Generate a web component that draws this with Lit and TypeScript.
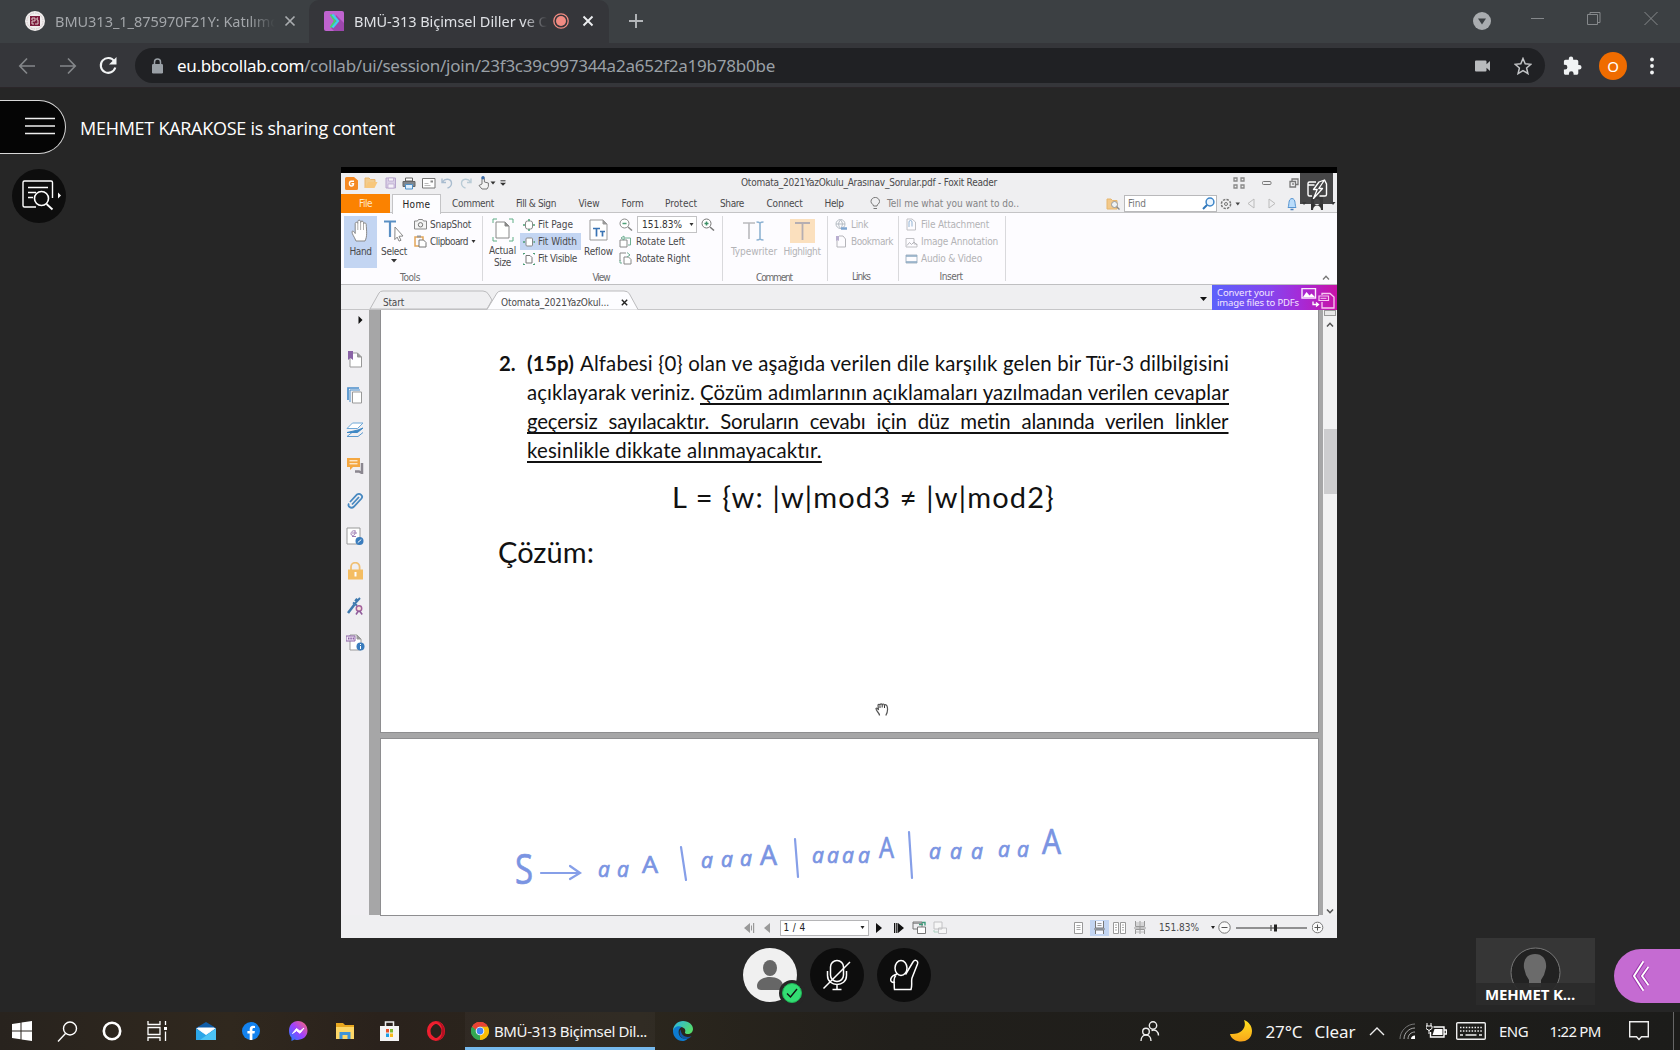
import { LitElement, html, svg, css } from "lit";
import { customElement, property } from "lit/decorators.js";

/** One line of text whose tracking is adjusted so that it spans exactly `w` pixels. */
@customElement("fit-text")
class FitText extends LitElement {
  @property({ type: Number }) w = 0;
  @property() text = "";
  static styles = css`
    :host { display: inline-block; white-space: pre; flex: none; text-align: left; }
    span { text-decoration: inherit; text-underline-offset: inherit; text-decoration-thickness: inherit; text-decoration-skip-ink: inherit; }
  `;
  render() {
    return html`<span>${this.text}</span>`;
  }
  updated() {
    const span = this.renderRoot.querySelector("span") as HTMLElement;
    span.style.letterSpacing = "0px";
    const natural = span.getBoundingClientRect().width;
    if (this.w > 0) {
      span.style.letterSpacing = `${(this.w - natural) / this.text.length}px`;
      this.style.width = `${this.w}px`;
    }
  }
}

const fit = (text: string, w: number, cls = "") => html`<fit-text class=${cls} .text=${text} .w=${w}></fit-text>`;
const ic = (w: number, h: number, body: unknown, cls = "") =>
  html`<svg class=${"ic " + cls} width=${w} height=${h} viewBox="0 0 ${w} ${h}" fill="none">${body}</svg>`;
const down = (c = "#333") => ic(6, 4, svg`<path d="M0 0h6L3 3.6z" fill=${c}/>`);

const base = css`
  :host { display: block; box-sizing: border-box; }
  * { box-sizing: border-box; }
  .ic { display: block; flex: none; }
`;

@customElement("browser-tabs")
class BrowserTabs extends LitElement {
  static styles = [base, css`
    :host { height: 43px; background: #3c4043; font: 14.5px/20px "Noto Sans", "Open Sans", sans-serif; color: #a3a6aa; }
    .strip { display: flex; height: 43px; align-items: stretch; }
    .tab { display: flex; align-items: center; padding-bottom: 1px; }
    .first { width: 309px; padding-left: 25px; }
    .active { width: 300px; padding-left: 15px; background: #35363a; border-radius: 10px 10px 0 0; color: #dfe1e5; }
    .title { overflow: hidden; margin-left: 10px; display: flex; -webkit-mask-image: linear-gradient(90deg, #000 88%, transparent); mask-image: linear-gradient(90deg, #000 88%, transparent); }
    .first .title { width: 220px; margin-right: 9px; }
    .active .title { width: 193px; margin-right: 6px; }
    .active .rec { margin-right: 13px; }
    .plus { padding: 0 0 1px 20px; display: flex; align-items: center; }
    .controls { margin-left: auto; display: grid; grid-template-columns: 30px 82px 30px 71px; justify-items: center; width: 213px; }
    .controls .ic { align-self: start; }
    .menu { margin-top: 12px; }
    .win { margin-top: 11px; }
    .close { margin-left: 13px; }
  `];
  render() {
    return html`<div class="strip">
      <div class="tab first">
        ${ic(20, 20, svg`<circle cx="10" cy="10" r="10" fill="#f1eeee"/><circle cx="10" cy="10" r="8" stroke="#cfc4c6" stroke-dasharray="1.5 1"/><rect x="5" y="5" width="10" height="10" fill="#7c1c3d"/><path d="M7 9V7h3v3H7v3h2M13 7h-1v2h1v4h-3" stroke="#dcc" stroke-width="1"/>`)}
        <div class="title">${fit("BMU313_1_875970F21Y: Katılımcı", 226)}</div>
        ${ic(12, 12, svg`<path d="M1.500 1.500l9 9M10.500 1.500l-9 9" stroke="#a9acaf" stroke-width="1.700"/>`)}
      </div>
      <div class="tab active">
        ${ic(20, 20, svg`<rect width="20" height="20" rx="2" fill="#bf63cf"/><path d="M12 4l8 8v8H10l-3-3z" fill="#9d47ad"/><path d="M6.500 3.500L11 10l-4.500 6.500" stroke="#45d66a" stroke-width="2"/><path d="M8.500 3.500L14 10l-5.500 6.500" stroke="#3ed0f0" stroke-width="2.200"/>`)}
        <div class="title">${fit("BMÜ-313 Biçimsel Diller ve Ot", 201)}</div>
        ${ic(16, 16, svg`<circle cx="8" cy="8" r="7.200" stroke="#f28b82" stroke-width="1.300"/><circle cx="8" cy="8" r="5" fill="#f28b82"/>`, "rec")}
        ${ic(12, 12, svg`<path d="M1.500 1.500l9 9M10.500 1.500l-9 9" stroke="#eceef0" stroke-width="1.900"/>`)}
      </div>
      <div class="plus">${ic(14, 14, svg`<path d="M7 0v14M0 7h14" stroke="#b4b7ba" stroke-width="1.900"/>`)}</div>
      <div class="controls">
        ${ic(18, 18, svg`<circle cx="9" cy="9" r="9" fill="#a9acaf"/><path d="M5 6.500h8L9 12.500z" fill="#3c4043"/>`, "menu")}
        ${ic(14, 14, svg`<path d="M0 7.500h13" stroke="#85888b"/>`, "win")}
        ${ic(14, 14, svg`<path d="M.5 3.500h10v10H.5zM3 3.500V1.500h10v10h-2.500" stroke="#85888b"/>`, "win")}
        ${ic(14, 14, svg`<path d="M.5 1l13 13M13.500 1l-13 13" stroke="#85888b"/>`, "win close")}
      </div>
    </div>`;
  }
}

@customElement("browser-toolbar")
class BrowserToolbar extends LitElement {
  static styles = [base, css`
    :host { height: 45px; background: #35363a; border-bottom: 1px solid #2b2629; font: 17px/24px "Noto Sans", "Open Sans", sans-serif; }
    .bar { display: grid; grid-template-columns: 40px 41px 40px 1417px 54px 28px 50px; grid-template-rows: 45px; padding-left: 7px; align-items: center; justify-items: center; }
    .pill { width: 1410px; height: 35px; border-radius: 18px; background: #202124; display: flex; align-items: center; padding-left: 17px; justify-self: end; color: #9aa0a6; }
    .pill fit-text { margin-top: 1px; }
    .lock { margin-right: 14px; }
    .host { color: #fff; }
    .cam { margin-left: auto; }
    .star { margin: 0 13px 0 24px; }
    .me { width: 28px; height: 28px; border-radius: 50%; background: #ef6c00; color: #fff; display: grid; place-items: center; font-size: 15px; line-height: 28px; }
  `];
  render() {
    return html`<div class="bar">
      ${ic(18, 18, svg`<path d="M17 9H2M9 1.500L1.800 9 9 16.500" stroke="#84878a" stroke-width="1.700"/>`)}
      ${ic(18, 18, svg`<path d="M1 9h15M9 1.500L16.200 9 9 16.500" stroke="#84878a" stroke-width="1.700"/>`)}
      ${ic(20, 20, svg`<path d="M16.300 5.200A7.400 7.400 0 1 0 17.300 11.500" stroke="#f1f3f4" stroke-width="2.100"/><path d="M18.500 1v7.500H11z" fill="#f1f3f4"/>`)}
      <div class="pill">
        ${ic(11, 16, svg`<rect y="6" width="11" height="9.500" rx="1.200" fill="#9aa0a6"/><path d="M2.500 6.500V4a3 3 0 0 1 6 0v2.500" stroke="#9aa0a6" stroke-width="1.500"/>`, "lock")}
        ${fit("eu.bbcollab.com", 127, "host")}${fit("/collab/ui/session/join/23f3c39c997344a2a652f2a19b78b0be", 471)}
        ${ic(15, 12, svg`<path d="M1 .5h9.500a1 1 0 0 1 1 1v2.800L15 1v10l-3.500-3.300v2.800a1 1 0 0 1-1 1H1a1 1 0 0 1-1-1v-9a1 1 0 0 1 1-1z" fill="#b9bbbd"/>`, "cam")}
        ${ic(18, 18, svg`<path d="M9 1.500l2.200 5.300 5.700.5-4.300 3.700 1.300 5.600L9 13.600l-4.900 3 1.300-5.600L1.100 7.300l5.700-.5z" stroke="#c3c5c7" stroke-width="1.500"/>`, "star")}
      </div>
      ${ic(20, 20, svg`<path d="M17.300 9h-1V5.500c0-1-.8-1.700-1.700-1.700h-3.400V2.700a2.200 2.200 0 0 0-4.400 0v1.100H3.600c-1 0-1.700.7-1.700 1.700v3.300H3a2.400 2.400 0 0 1 0 4.800H1.900V17c0 1 .7 1.800 1.700 1.800h3.300v-1.100a2.300 2.300 0 0 1 4.700 0v1.100h3c1 0 1.700-.8 1.700-1.800v-3.500h1a2.200 2.200 0 0 0 0-4.500z" fill="#f1f3f4"/>`)}
      <div class="me">O</div>
      ${ic(4, 18, svg`<circle cx="2" cy="2.500" r="1.900" fill="#f1f3f4"/><circle cx="2" cy="9" r="1.900" fill="#f1f3f4"/><circle cx="2" cy="15.500" r="1.900" fill="#f1f3f4"/>`)}
    </div>`;
  }
}

const page = (x: number, y: number, w: number, h: number, c: string) =>
  svg`<path d="M${x} ${y}h${w - 4}l4 4v${h - 4}h${-w}z" fill="#fff" stroke=${c}/><path d="M${x + w - 4} ${y}v4h4" fill=${c} stroke=${c}/>`;

@customElement("pdf-reader")
class PdfReader extends LitElement {
  static styles = [base, css`
    :host { width: 996px; height: 771px; background: #efeff1; border-top: 6px solid #000; font: 10px/12px "DejaVu Sans Condensed", "DejaVu Sans", sans-serif; font-stretch: condensed; color: #4a4a4c; position: relative; }
    .titlebar { display: grid; grid-template-columns: 17px 22px 17px 20px 19px 18px 19px 23px 10px 233px 256px 231px 21px 35px 20px; grid-template-rows: 20px; height: 21px; padding-left: 2px; align-items: center; justify-items: center; }
    .menus { display: grid; grid-template-columns: 49px 2px 49px 64px 62px 44px 43px 54px 48px 57px 42px 32px 132px 86px 16px 3px 93px 26px 15px 28px 22px 29px; grid-template-rows: 19px; height: 19px; align-items: center; justify-items: center; border-bottom: 1px solid #c4c4c6; }
    .file { background: #fb8200; color: #ffe6c8; width: 49px; height: 19px; display: grid; place-items: center; align-self: start; }
    .home { background: #fdfdff; width: 49px; height: 20px; border: 1px solid #c4c4c6; border-bottom: 0; display: grid; place-items: center; align-self: start; color: #222; }
    .bulb { justify-self: end; margin-right: 6px; }
    .find { width: 93px; height: 17px; background: #fff; border: 1px solid #b9b9bb; display: flex; align-items: center; justify-content: space-between; padding: 0 1px 0 3px; color: #777; }
    .tell { color: #848486; }
    .ribbon { display: flex; height: 72px; background: #fdfcff; border-bottom: 1px solid #bfbfc1; padding-top: 3px; }
    .group { display: flex; flex-direction: column; align-items: center; border-right: 1px solid #d9d9dc; height: 65px; }
    .cols { display: flex; height: 52px; width: 100%; }
    .name { line-height: 16px; height: 13px; color: #6a6a6c; margin-top: 2px; }
    .tools { width: 142px; } .tools .cols { padding-left: 3px; }
    .tools .name { padding-right: 3px; }
    .view { width: 240px; } .view .cols { padding-left: 2px; } .view .name { padding-right: 3px; }
    .comment { width: 105px; } .comment .cols { padding-left: 4px; } .comment .name { padding-right: 2px; }
    .links { width: 71px; } .links .name { padding-right: 4px; }
    .insert { width: 107px; } .insert .name { padding-right: 2px; }
    .big { display: flex; flex-direction: column; align-items: center; height: 52px; padding-top: 2px; }
    .big .art { height: 28px; display: grid; place-items: center; padding-bottom: 3px; }
    .big .arrow { margin-top: 1px; }
    .on { background: #c3d5f2; }
    .w33 { width: 33px; } .w34 { width: 34px; } .w35 { width: 35px; } .w42 { width: 42px; } .w54 { width: 54px; }
    .dim { color: #b3b3b6; }
    .list { display: grid; grid-template-rows: 17px 17px 17px; }
    .row { display: flex; align-items: center; gap: 3px; }
    .l1 { padding-left: 3px; } .l2 { width: 61px; } .l2 .row { padding-left: 3px; gap: 3px; height: 17px; }
    .l3 { padding-left: 3px; } .l3 .row { gap: 4px; } .l4 { padding-left: 7px; } .l5 { padding-left: 6px; }
    .combo { width: 60px; height: 17px; border: 1px solid #c3c3c5; background: #fff; display: flex; align-items: center; justify-content: space-between; padding: 0 2px 0 4px; color: #333; }
    .fold { margin: auto 7px 4px auto; }
    .doctabs { display: flex; height: 25px; align-items: flex-end; border-bottom: 1px solid #c6c6c8; position: relative; }
    .shape { position: absolute; left: 0; bottom: -1px; }
    .label { position: relative; height: 12px; }
    .lab1 { margin-left: 42px; } .lab2 { margin-left: 97px; } .x { margin-left: 12px; height: 10px; position: relative; }
    .dd { margin: 0 5px 8px auto; }
    .promo { width: 125px; height: 25px; background: linear-gradient(90deg, #5c62fb, #8446ee 45%, #a52bd8 70%, #c812a6); display: flex; color: #f4e6ff; font: 9.500px/10px "Noto Sans", sans-serif; padding: 3px 0 0 5px; margin-bottom: -1px; }
    .lines { display: flex; flex-direction: column; width: 84px; }
    .body { display: flex; height: 605px; }
    .side { width: 28px; display: grid; grid-template-rows: 19px 48.700px repeat(8, 35.200px); justify-items: center; align-items: center; background: #f0eff2; }
    .tip { margin-left: 11px; }
    .bm { margin-top: 13px; }
    .canvas { width: 954px; background: #a6a6a7; padding: 0 5px 0 12px; display: flex; flex-direction: column; gap: 7px; }
    .sheet { background: #fff; outline: 1px solid #8e8e90; color: #111; font-family: Lato, Carlito, sans-serif; font-stretch: normal; }
    .s1 { height: 422px; padding: 39px 88px 0 118px; }
    .s2 { height: 176px; }
    .q { display: grid; grid-template-columns: 28px 702px; font-size: 20.400px; line-height: 29.100px; }
    .ln { display: flex; height: 29.100px; }
    .b { font-weight: 700; margin-right: 6px; }
    .sp { margin-right: 5px; }
    .u { text-decoration: underline; text-decoration-thickness: 1.500px; text-underline-offset: 3px; text-decoration-skip-ink: none; }
    .wide { word-spacing: 6px; }
    .formula { font-size: 29px; line-height: 40px; margin: 12px 0 0 173px; height: 40px; }
    .sol { font-size: 29px; line-height: 40px; margin: 15px 0 0 -1px; height: 40px; }
    .cursor { position: absolute; left: 534px; top: 529px; }
    .ink { display: block; font: italic 21px "Open Sans", "Noto Sans", sans-serif; fill: #7a94e2; }
    .scroll { width: 14px; background: #f2f2f3; display: flex; flex-direction: column; align-items: center; }
    .split { width: 12px; height: 6px; border: 1px solid #999; background: #e8e8e8; margin-bottom: 6px; }
    .thumb { width: 13px; height: 65px; background: #cdcdcf; margin: 102px 0 auto; }
    .scroll .last { margin-bottom: 1px; }
    .status { display: grid; height: 22px; align-items: center; justify-items: center; grid-template-columns: 18px 18px 96px 14px 25px 16px 25px 117px 19px 22px 19px 21px 58px 10px 13px 81px 13px; padding: 3px 0 0 399px; }
    .pg { width: 89px; height: 16px; background: #fff; border: 1px solid #b5b5b7; display: flex; align-items: center; justify-content: space-between; padding: 0 3px; color: #222; }
    .hl { background: #c3d5f2; width: 19px; height: 16px; display: grid; place-items: center; }
    .badge { position: absolute; left: 959px; top: 0; width: 33px; height: 31px; background: #3a3a3bee; display: grid; place-items: center; }
  `];

  titlebar() {
    return html`<div class="titlebar">
      ${ic(13, 13, svg`<path d="M1.500 0H9l4 3.500V11.500a1.500 1.500 0 0 1-1.500 1.500h-10A1.500 1.500 0 0 1 0 11.500v-10A1.500 1.500 0 0 1 1.500 0z" fill="#f58a24"/><path d="M9 4.200H6.200C4 4.200 3.600 9 6.500 9c1.500 0 2-.8 2-2.300H6.500" stroke="#fff" stroke-width="1.400"/>`)}
      ${ic(14, 12, svg`<path d="M1 11V1h4l1.500 1.500H11V5" stroke="#eab56b" fill="#f3cc8d"/><path d="M1 11L4 5h9.500L10.500 11z" fill="#f7c77c"/>`)}
      ${ic(12, 12, svg`<path d="M1 1h9.500v10H1z" fill="#d9cfe6" stroke="#b7a5cc"/><path d="M3.500 1h5v3h-5zM3 7h6v4H3z" fill="#f5f2f9" stroke="#b7a5cc" stroke-width=".7"/>`)}
      ${ic(14, 13, svg`<path d="M3.500 1h7v3h-7z" fill="#fff" stroke="#666"/><path d="M1 4.500h12v5H1z" fill="#7f878f" stroke="#666"/><path d="M3.500 7.500h7V12h-7z" fill="#dff0ff" stroke="#4f91c9"/>`)}
      ${ic(14, 11, svg`<path d="M.5.5h12.500v9.500H.5z" fill="#fff" stroke="#777"/><path d="M8.500 2.500h2.500v2H8.500z" fill="#888"/><path d="M2.500 5.500h4M2.500 7.500h6" stroke="#bbb"/>`)}
      ${ic(12, 12, svg`<path d="M1 1.500v4h4M1.500 5C4 1 10 1.500 10.500 6c.2 2.500-2 4.500-4 5" stroke="#a9bccf" stroke-width="1.400"/>`)}
      ${ic(12, 12, svg`<path d="M11 1.500v4H7M10.500 5C8 1 2 1.500 1.500 6c-.2 2.500 2 4.500 4 5" stroke="#b9cbd6" stroke-width="1.400"/>`)}
      ${ic(18, 14, svg`<path d="M4 8V2.500a1.200 1.200 0 0 1 2.400 0V6l4 1v3.500L9 13H4L1 9.500z" fill="#f3f3f3" stroke="#777"/><circle cx="5" cy="1.800" r="1.700" fill="#3c6ca8"/><path d="M12.500 5.500h5L15 8.500z" fill="#333"/>`)}
      ${ic(6, 6, svg`<path d="M.5.8h5" stroke="#333"/><path d="M0 2.700h6L3 5.800z" fill="#333"/>`)}
      <i></i>${fit("Otomata_2021YazOkulu_Arasınav_Sorular.pdf - Foxit Reader", 256)}<i></i>
      ${ic(12, 12, svg`<path d="M1 1h3v3H1zM8 1h3v3H8zM1 8h3v3H1zM8 8h3v3H8z" stroke="#888" stroke-width="1.300"/>`)}
      ${ic(10, 4, svg`<rect x=".5" y=".5" width="8.500" height="3" rx="1" stroke="#777"/>`)}
      ${ic(10, 10, svg`<path d="M1 3.500h5.500V9H1zM3 3.500V1h6v5.500H6.500" stroke="#777" stroke-width="1.300"/><path d="M3 6h2" stroke="#555"/>`)}
    </div>`;
  }

  menus() {
    return html`<div class="menus">
      <div class="file">${fit("File", 13)}</div><i></i>
      <div class="home">${fit("Home", 28)}</div>
      ${fit("Comment", 42)}${fit("Fill & Sign", 40)}${fit("View", 21)}${fit("Form", 22)}${fit("Protect", 32)}${fit("Share", 24)}${fit("Connect", 36)}${fit("Help", 19)}
      ${ic(11, 13, svg`<path d="M3.500 9C3.500 7 1 7 1 4.500a4.200 4 0 0 1 8.500 0C9.500 7 7 7 7 9z" stroke="#777"/><path d="M3.500 11.500h3.500" stroke="#777"/>`, "bulb")}
      ${fit("Tell me what you want to do..", 132, "tell")}<i></i>
      ${ic(14, 12, svg`<path d="M1 11V1h4l1.500 1.500H11V11z" fill="#f3c98a" stroke="#e6b66f"/><circle cx="8.500" cy="6.500" r="3" fill="#eef3f6" stroke="#999"/><path d="M10.700 8.700l2.800 2.800" stroke="#888" stroke-width="1.300"/>`)}<i></i>
      <div class="find">${fit("Find", 18)}${ic(13, 13, svg`<circle cx="8" cy="5" r="3.900" fill="#eaf5ff" stroke="#3f86c9" stroke-width="1.500"/><path d="M5 8L1 12" stroke="#2f76b9" stroke-width="2"/>`)}</div>
      ${ic(24, 12, svg`<circle cx="8" cy="6" r="4.600" stroke="#777" stroke-width="1.500" stroke-dasharray="2.400 1.200"/><circle cx="8" cy="6" r="1.500" stroke="#777"/><path d="M17.500 4.500h4.500L19.800 7.500z" fill="#444"/>`)}
      ${ic(8, 11, svg`<path d="M7 1v9L1 5.500z" stroke="#bbb"/>`)}
      ${ic(8, 11, svg`<path d="M1 1v9l6-4.500z" stroke="#bbb"/>`)}
      ${ic(20, 14, svg`<path d="M1 10.500C2.500 8 .8 2 5 1.500 9.200 2 7.500 8 9 10.500z" fill="#b9dcfb" stroke="#5593d0"/><path d="M3.500 12.500h3" stroke="#4b7fb8" stroke-width="1.500"/><path d="M15 5h4.500L17 8z" fill="#333"/>`)}
      ${ic(28, 13, svg`<path d="M2 0h12v13H2z" fill="#333"/><circle cx="8" cy="5" r="3" fill="#f4f4f4"/><path d="M4 13c0-6 8-6 8 0z" fill="#f4f4f4"/><path d="M22 5h4.500L24 8z" fill="#333"/>`)}
    </div>`;
  }

  ribbon() {
    return html`<div class="ribbon">
      <div class="group tools"><div class="cols">
        <div class="big w33 on"><div class="art">${ic(20, 23, svg`<path d="M5 22C3 17 .8 15 1 12.500c1-1 2.200 0 3.200 2V4.500c0-1.600 2.400-1.600 2.600 0V2.500c0-1.800 2.600-1.800 2.800 0v1c0-1.900 2.700-1.900 2.900 0V5c.2-1.700 2.600-1.500 2.700.3C15.500 12 16.500 17 14 22z" fill="#fff" stroke="#888"/><path d="M6.800 5v6M9.600 3v8M12.500 4v7" stroke="#999" stroke-width=".8"/>`)}</div>${fit("Hand", 22)}</div>
        <div class="big w34"><div class="art">${ic(22, 23, svg`<path d="M1 2.500h12M7 2v16" stroke="#5a8fc4" stroke-width="2.200"/><path d="M12 8l8 9-4 .3 2 4-2 .8-1.800-4-2.400 2.500z" fill="#fff" stroke="#888"/>`)}</div>${fit("Select", 26)}<div class="arrow">${down()}</div></div>
        <div class="list l1">
          <div class="row">${ic(13, 11, svg`<path d="M.5 2h3l1-1.500h4L9.500 2h3v8H.5z" fill="#f4f4f4" stroke="#888"/><circle cx="6.500" cy="5.800" r="2.200" stroke="#777"/>`)}${fit("SnapShot", 41)}</div>
          <div class="row">${ic(13, 13, svg`<path d="M1 2h8v9H1z" stroke="#e2a55a" stroke-width="1.500"/><path d="M3 .5h4v2H3z" fill="#999"/><path d="M5 5h4.500L12 7.500V12H5z" fill="#fff" stroke="#777"/>`)}${fit("Clipboard", 38)}${ic(5, 3, svg`<path d="M.5 0h4L2.500 3z" fill="#333"/>`)}</div>
        </div></div><div class="name">${fit("Tools", 20)}</div></div>
      <div class="group view"><div class="cols">
        <div class="big w35"><div class="art">${ic(22, 24, svg`${page(4, 4, 13, 16, "#888")}<path d="M1 5V1h4M17 1h4v4M21 19v4h-4M5 23H1v-4" stroke="#5fae86"/>`)}</div>${fit("Actual", 27)}${fit("Size", 17)}</div>
        <div class="list l2">
          <div class="row">${ic(12, 12, svg`<rect x="2.500" y="2" width="7" height="8" rx="2" fill="#fff" stroke="#888"/><path d="M6 0v2M6 10v2M0 6h2M10 6h2" stroke="#4d9f77" stroke-width="1.500"/>`)}${fit("Fit Page", 35)}</div>
          <div class="row on">${ic(12, 12, svg`<rect x="3" y="2" width="6.500" height="8" rx="1" fill="#fff" stroke="#888"/><path d="M0 6h2M10.500 6H12" stroke="#4d9f77" stroke-width="1.500"/>`)}${fit("Fit Width", 39)}</div>
          <div class="row">${ic(12, 12, svg`<path d="M3 2.500h4l2 2V10H3z" fill="#fff" stroke="#777"/><path d="M0 2V.5h2M10 .5h2V2M12 10v1.500h-2M2 11.500H0V10" stroke="#4d9f77"/>`)}${fit("Fit Visible", 39)}</div>
        </div>
        <div class="big w35"><div class="art">${ic(20, 23, svg`${page(1, 1, 17, 20, "#999")}<path d="M4 9.500h7M7.500 9v8.500M11 12.500h5M13.500 12v5.500" stroke="#3a74b4" stroke-width="1.700"/>`)}</div>${fit("Reflow", 29)}</div>
        <div class="list l3">
          <div class="row">${ic(14, 13, svg`<circle cx="5.500" cy="5.500" r="4.500" fill="#fff" stroke="#888"/><path d="M9 9l4 3.500" stroke="#888" stroke-width="1.500"/><path d="M3.500 5.500h4" stroke="#4d9f77" stroke-width="1.500"/>`)}<div class="combo">${fit("151.83%", 40)}${ic(5, 3, svg`<path d="M.5 0h4L2.500 3z" fill="#333"/>`)}</div>${ic(14, 13, svg`<circle cx="5.500" cy="5.500" r="4.500" fill="#fff" stroke="#777"/><path d="M9 9l4 3.500" stroke="#777" stroke-width="1.500"/><path d="M3.500 5.500h4M5.500 3.500v4" stroke="#3c8f67" stroke-width="1.500"/>`)}</div>
          <div class="row">${ic(13, 13, svg`<path d="M1 5h7v7H1z" fill="#fff" stroke="#888"/><path d="M5 3V1l-3 2 3 2V3h6.500v7H9" stroke="#6fae92"/>`)}${fit("Rotate Left", 49)}</div>
          <div class="row">${ic(13, 13, svg`<path d="M1 9V1h6M5 5h4.500L12 7.500V12H5z" fill="#fff" stroke="#888"/><path d="M8 .5L11 3 8 5M1 8v3h2" stroke="#6fae92"/>`)}${fit("Rotate Right", 54)}</div>
        </div></div><div class="name">${fit("View", 17)}</div></div>
      <div class="group comment dim"><div class="cols">
        <div class="big w54"><div class="art">${ic(24, 20, svg`<path d="M1 2h12M7 2v16" stroke="#b9b9bd" stroke-width="1.600"/><path d="M14.500 1c2 0 3 .5 3.500 1 .5-.5 1.500-1 3.500-1M14.500 19c2 0 3-.5 3.500-1 .5.5 1.500 1 3.500 1M18 2v16" stroke="#8fb3d3" stroke-width="1.600"/>`)}</div>${fit("Typewriter", 46)}</div>
        <div class="big w42"><div class="art">${ic(25, 24, svg`<path d="M0 0h25v24H0z" fill="#fbe0be"/><path d="M5 4h15M12.500 4v17" stroke="#b5aeb2" stroke-width="1.800"/>`)}</div>${fit("Highlight", 37)}</div>
        </div><div class="name">${fit("Comment", 36)}</div></div>
      <div class="group links dim"><div class="cols"><div class="list l4">
          <div class="row">${ic(13, 12, svg`<circle cx="5.500" cy="5" r="4.500" stroke="#b5bcc3"/><path d="M1 5h9M5.500 1c-2.500 2.500-2.500 5.500 0 8.500M5.500 1c2.500 2.500 2.500 5.500 0 8.500" stroke="#b5bcc3"/><path d="M6 9.500h6" stroke="#7fa6d0" stroke-width="2.500"/>`)}${fit("Link", 17)}</div>
          <div class="row">${ic(13, 13, svg`<path d="M4 1h4l2.500 3v8H2V5" stroke="#b5b5ba"/><path d="M1 1h3v5L2.500 5 1 6z" fill="#b9aed0"/>`)}${fit("Bookmark", 42)}</div>
        </div></div><div class="name">${fit("Links", 18)}</div></div>
      <div class="group insert dim"><div class="cols"><div class="list l5">
          <div class="row">${ic(13, 13, svg`<path d="M2 1h5l3.500 3v8H2z" stroke="#c0c0c4"/><path d="M4 9V4a1.500 1.500 0 0 1 3 0v4.500" stroke="#93b4d4"/>`)}${fit("File Attachment", 68)}</div>
          <div class="row">${ic(13, 12, svg`<path d="M1 2.500h8V8h3v3H1z" stroke="#c0c0c4"/><path d="M2 9.500l2.500-3 2 2L9 6l3 3" stroke="#b5b5ba"/>`)}${fit("Image Annotation", 77)}</div>
          <div class="row">${ic(13, 10, svg`<path d="M1 1h11v8H1z" stroke="#a9b7c4"/><path d="M1 2h11M1 8h11" stroke="#8ba8c2" stroke-width="1.600"/>`)}${fit("Audio & Video", 61)}</div>
        </div></div><div class="name">${fit("Insert", 23)}</div></div>
      ${ic(8, 5, svg`<path d="M1 4.500l3-3.200 3 3.200" stroke="#777" stroke-width="1.300"/>`, "fold")}
    </div>`;
  }

  doctabs() {
    return html`<div class="doctabs">
      ${ic(340, 21, svg`<path d="M29 20L38 4Q39 2 42 2H142Q146 2 148 6L151 11L146 20z" fill="#efeff1" stroke="#bbbbbd"/><path d="M146 20.500L156 4Q157.500 2 160 2H283Q287 2 288.500 5L297 20.500" fill="#fdfdff" stroke="#bbbbbd"/>`, "shape")}
      <div class="label lab1">${fit("Start", 21)}</div>
      <div class="label lab2">${fit("Otomata_2021YazOkul...", 108)}</div>
      <div class="x">${ic(7, 7, svg`<path d="M.8.8l5.400 5.400M6.200.8L.8 6.200" stroke="#222" stroke-width="1.400"/>`)}</div>
      <div class="dd">${ic(7, 4, svg`<path d="M0 0h7L3.500 4z" fill="#111"/>`)}</div>
      <div class="promo"><div class="lines">${fit("Convert your", 57)}${fit("image files to PDFs", 82)}</div>
        ${ic(35, 22, svg`<path d="M1 .5h13.500v9.500H1z" stroke="#fbeaff" stroke-width="1.400"/><path d="M2 9l3.500-5 3 3.500L10.500 5.500 14 9z" fill="#fff"/><path d="M12 13.500v3h5M15 14.500l2.500 2-2.500 2" stroke="#fff" stroke-width="1.300"/><path d="M21 7V5.500h8L33 9v11H21V14" stroke="#f7c9f2" stroke-width="1.300"/><path d="M18 8h9.500v4.500H18z" stroke="#f7c9f2" stroke-width="1.200"/><path d="M19.500 10.300h6" stroke="#f7c9f2"/>`)}
      </div>
    </div>`;
  }

  side() {
    return html`<div class="side">
      ${ic(5, 8, svg`<path d="M.5 0v8l4-4z" fill="#111"/>`, "tip")}
      ${ic(16, 18, svg`${page(3, 2, 11.500, 14, "#999")}<path d="M1 0h5v9L3.500 7 1 9z" fill="#8a63a6"/>`, "bm")}
      ${ic(16, 17, svg`<path d="M1 13V1h11" stroke="#4b8fcc" stroke-width="1.700"/><path d="M3 15V3h10" stroke="#4b8fcc"/><path d="M5.500 5h9v11h-9z" fill="#fff" stroke="#999"/>`)}
      ${ic(18, 16, svg`<path d="M1 14.500h11l5-4M1 14.500l5-4" stroke="#5d9bd0"/><path d="M1 10.500h10.500l5.500-4.500L12 8z" fill="#3f88c5" stroke="#3f88c5"/><path d="M1 6.500L6.500 1H17l-5.500 5.500z" fill="#fff" stroke="#6fa8d8"/>`)}
      ${ic(17, 17, svg`<path d="M8 14.500h4l3 1.500V6" stroke="#8b8790" stroke-width="2.500"/><path d="M0 1h13v9H6l-3 3v-3H0z" fill="#f4a741"/><path d="M2.500 3.800h8M2.500 6.800h8" stroke="#fff"/>`)}
      ${ic(17, 17, svg`<path d="M5 12.500l7-7.500M3 10L10 2.500C13 .5 16.500 4 14.500 6.500L7 14.500C4 17.500 0 14 2 11.500" stroke="#4788c0" stroke-width="1.800"/>`)}
      ${ic(18, 18, svg`<path d="M1 1h13v16H1z" fill="#fff" stroke="#999"/><path d="M9.500 4c-3-1-4.500 1-4.500 3s3.500 2 4-.2V3.500M6 6h5M10 9.500H6" stroke="#a07fb5"/><circle cx="13.500" cy="14" r="4" fill="#3a7cbd"/><path d="M11.800 15.500l3.500-3" stroke="#fff"/>`)}
      ${ic(15, 18, svg`<path d="M3 8V5a4.300 4.300 0 0 1 8.600 0v3" stroke="#f0c074" stroke-width="1.800"/><path d="M0 7.500h15v10H0z" fill="#f4bd62"/><path d="M7.500 10v4.500" stroke="#fff" stroke-width="2"/>`)}
      ${ic(17, 18, svg`<path d="M1 16L7.500 7.500" stroke="#3f79ae" stroke-width="2.600"/><path d="M6 5.500l4 3M7.500 7L13 1M8 4l2-2.500" stroke="#3f79ae" stroke-width="1.900"/><circle cx="12" cy="11.500" r="2.700" fill="#f8e3d8" stroke="#a2609c" stroke-width="1.500"/><path d="M9 17.500l2-3h2l2.200 3" stroke="#8f5b9b" stroke-width="1.600"/>`)}
      ${ic(19, 18, svg`${page(4, 2, 11, 15, "#999")}<path d="M0 3h9v5H0z" fill="#f2eaf7" stroke="#8c62a6"/><path d="M2 5.500h6" stroke="#8c62a6" stroke-width="2" stroke-dasharray="1.500 .8"/><circle cx="14.500" cy="13.500" r="4" fill="#3a7cbd"/><path d="M14.500 11v1M14.500 13v3" stroke="#fff"/>`)}
    </div>`;
  }

  ink() {
    return svg`<g stroke="#869fe8" stroke-width="2.200" stroke-linecap="round" fill="none">
      <path d="M160 134H197M189 127l10 7-10 6"/><path d="M300 108l5 33M414 100l3 38M528 93l3 46"/></g>
      <g stroke="#7a94e2" stroke-width=".7">
      <text x="134" y="145" font-size="42" textLength="18" lengthAdjust="spacingAndGlyphs" font-style="normal">S</text>
      <text x="217 236" y="138">aa</text><text x="261" y="134" font-size="24" textLength="16" lengthAdjust="spacingAndGlyphs" font-style="normal">A</text>
      <text x="320 340 359" y="129 128 127">aaa</text><text x="379" y="126" font-size="27" textLength="17" lengthAdjust="spacingAndGlyphs" font-style="normal">A</text>
      <text x="431 446 461 477" y="124">aaaa</text><text x="498" y="119" font-size="30" textLength="15" lengthAdjust="spacingAndGlyphs" font-style="normal">A</text>
      <text x="548 569 590" y="120">aaa</text><text x="617 636" y="118">aa</text>
      <text x="661" y="115" font-size="35" textLength="19" lengthAdjust="spacingAndGlyphs" font-style="normal">A</text></g>`;
  }

  render() {
    return html`${this.titlebar()}${this.menus()}${this.ribbon()}${this.doctabs()}
      <div class="body">${this.side()}
        <div class="canvas">
          <div class="sheet s1">
            <div class="q"><div class="b">2.</div><div>
              <div class="ln">${fit("(15p)", 47, "b")}${fit("Alfabesi {0} olan ve aşağıda verilen dile karşılık gelen bir Tür-3 dilbilgisini", 649)}</div>
              <div class="ln">${fit("açıklayarak veriniz.", 168, "sp")}${fit("Çözüm adımlarının açıklamaları yazılmadan verilen cevaplar", 529, "u")}</div>
              <div class="ln">${fit("geçersiz sayılacaktır. Soruların cevabı için düz metin alanında verilen linkler", 702, "u wide")}</div>
              <div class="ln">${fit("kesinlikle dikkate alınmayacaktır.", 295, "u")}</div>
            </div></div>
            <div class="formula">${fit("L = {w: |w|mod3 ≠ |w|mod2}", 383)}</div>
            <div class="sol">${fit("Çözüm:", 96)}</div>
          </div>
          <div class="sheet s2">${ic(936, 176, this.ink(), "ink")}</div>
        </div>
        <div class="scroll"><div class="split"></div>
          ${ic(8, 5, svg`<path d="M1 4.500l3-3.200 3 3.200" stroke="#555" stroke-width="1.500"/>`)}
          <div class="thumb"></div>
          ${ic(8, 5, svg`<path d="M1 .5l3 3.200L7 .5" stroke="#555" stroke-width="1.500"/>`, "last")}
        </div>
      </div>
      <div class="status">
        ${ic(11, 10, svg`<path d="M6 0v10L0 5zM7 2.500h1v5H7zM9 0h1.200v10H9z" fill="#999"/>`)}
        ${ic(6, 10, svg`<path d="M6 0v10L0 5z" fill="#999"/>`)}
        <div class="pg">${fit("1 / 4", 22)}${ic(5, 3, svg`<path d="M.5 0h4L2.500 3z" fill="#222"/>`)}</div>
        ${ic(6, 10, svg`<path d="M0 0v10l6-5z" fill="#111"/>`)}
        ${ic(10, 10, svg`<path d="M4 0v10l6-5zM0 0h1.300v10H0zM2.200 0h1.300v10H2.200z" fill="#111"/>`)}
        ${ic(15, 13, svg`<path d="M1 1h9v7H1zM1 2.200h9" stroke="#777"/><path d="M5.500 6h8v6.500h-8z" fill="#fff" stroke="#777"/><path d="M7 3.500h4M10 1.500h3v3" stroke="#3c9b7b" stroke-width="1.400"/>`)}
        ${ic(14, 13, svg`<path d="M1 1h8v7H1zM5.500 7h8v5.500h-8z" fill="#f6f6f6" stroke="#c2c2c4"/><path d="M1 9v2h4" stroke="#a9cfc0"/>`)}
        <i></i>
        ${ic(9, 12, svg`<path d="M.5.5h8v11h-8z" fill="#fff" stroke="#999"/><path d="M2.500 3.500h4M2.500 5.500h4M2.500 7.500h4" stroke="#aaa"/>`)}
        <div class="hl">${ic(11, 13, svg`<path d="M1.500 0v7h8V0M1.500 13v-4h8v4M0 8h11" fill="#f4f7ff" stroke="#777"/><path d="M3.500 2.500h4M3.500 4.500h4" stroke="#999"/>`)}</div>
        ${ic(13, 12, svg`<path d="M.5.5h5v11h-5zM7.500.5h5v11h-5z" fill="#fff" stroke="#999"/><path d="M2 3h2M2 5.500h2M2 8h2M9 3h2M9 5.500h2M9 8h2" stroke="#aaa"/>`)}
        ${ic(12, 13, svg`<path d="M1.500 0v5.500h9V0M6 0v13M1.500 13V8.500h9V13M0 7h12" stroke="#999"/><path d="M2 2h8M2 4h8M2 11h8" stroke="#bbb"/>`)}
        ${fit("151.83%", 40)}
        ${ic(4, 3, svg`<path d="M0 0h4L2 3z" fill="#222"/>`)}
        ${ic(13, 13, svg`<circle cx="6.500" cy="6.500" r="5.700" fill="#fafafa" stroke="#777"/><path d="M3.500 6.500h6" stroke="#555"/>`)}
        ${ic(71, 8, svg`<path d="M0 4h71" stroke="#333" stroke-width="1.200"/><path d="M35 1v6" stroke="#555" stroke-width="1.200"/><path d="M38 .5h3v7h-3z" fill="#222"/>`)}
        ${ic(13, 13, svg`<circle cx="5.500" cy="6.500" r="5.300" fill="#fafafa" stroke="#777"/><path d="M2.500 6.500h6M5.500 3.500v6" stroke="#555"/>`)}
      </div>
      <div class="badge">${ic(22, 20, svg`<path d="M10 3H3.500A1.500 1.500 0 0 0 2 4.500v11A1.500 1.500 0 0 0 3.500 17H6M2 6h6.500M13.500 17h5.500a1.500 1.500 0 0 0 1.500-1.500V5L18.500 1" stroke="#fff" stroke-width="1.400"/><path d="M13 3L7.500 10.500h3.700L7.500 19.500 16.500 9.500h-3.700L18.500 1z" stroke="#fff" stroke-width="1.300" stroke-linejoin="round"/>`)}</div>
      <div class="cursor">${ic(14, 15, svg`<path d="M4.500 13.500c0-3-3.500-4-3.500-7 1-.8 2 .3 2.500 1.500L3 3c.5-1 1.800-.8 2 .3C5.200 1.500 7 1.500 7.200 3c.3-1.400 2-1.300 2.200.2C10 2.300 11.500 2.800 12 4c1 3 .8 6-1.200 9.500" fill="#fff" stroke="#555" stroke-width="1.200"/><path d="M5 3.500v2.500M7.200 3v2.500M9.500 3.500V6" stroke="#333"/>`)}</div>`;
  }
}

@customElement("session-view")
class SessionView extends LitElement {
  static styles = [base, css`
    :host { height: 924px; background: #262626; color: #fff; font: 18px/24px "Open Sans", "Noto Sans", sans-serif; }
    .head { display: flex; height: 79px; padding-top: 12px; gap: 14px; }
    .menu { width: 66px; height: 54px; border: 1px solid #d8d8d8; border-left: 0; border-radius: 0 27px 27px 0; background: #050505; padding: 16px 0 0 25px; }
    .head fit-text { margin-top: 16px; }
    .main { display: flex; height: 771px; }
    .left { width: 341px; padding: 2px 0 0 12px; }
    .round { width: 54px; height: 54px; border-radius: 50%; background: #0d0d0d; display: grid; place-items: center; }
    .foot { display: flex; height: 74px; padding-left: 743px; align-items: flex-start; }
    .foot .round { margin-top: 10px; }
    .foot .avatar { position: relative; background: #f0f0f0; margin-right: 13px; }
    .ok { position: absolute; left: 36px; top: 32px; }
    .mic { margin-right: 13px; }
    .card { margin-left: 545px; width: 119px; height: 67px; background: #363636; position: relative; }
    .face { position: absolute; left: 34px; top: 9px; }
    .who { position: absolute; left: 0; bottom: 0; width: 119px; height: 22px; background: #2b2b2bee; padding-left: 9px; font: 700 15px/22px "Open Sans", sans-serif; }
    .open { width: 66px; height: 54px; margin: 11px 0 0 auto; border-radius: 27px 0 0 27px; background: #c56bd2; display: flex; align-items: center; padding-left: 16px; }
  `];
  render() {
    return html`<div class="head">
        <div class="menu">${ic(30, 18, svg`<path d="M0 1.500h30M0 9h30M0 16.500h30" stroke="#eee" stroke-width="1.300"/>`)}</div>
        ${fit("MEHMET KARAKOSE is sharing content", 315)}
      </div>
      <div class="main">
        <div class="left"><div class="round">${ic(44, 32, svg`<g transform="translate(1 0)"><path d="M18 27H6.500A1.500 1.500 0 0 1 5 25.500V2.500A1.500 1.500 0 0 1 6.500 1h26.500A1.500 1.500 0 0 1 34.500 2.500V18M10 7.500h20M10 12.500h8M10 17.500h5" stroke="#fff" stroke-width="1.400"/><circle cx="23.500" cy="18.500" r="7" stroke="#fff" stroke-width="1.600"/><path d="M28.500 24l6 5.500" stroke="#fff" stroke-width="1.800"/><path d="M40 12.500l3 3-3 3z" fill="#fff"/></g>`)}</div></div>
        <pdf-reader></pdf-reader>
      </div>
      <div class="foot">
        <div class="round avatar">
          ${ic(32, 32, svg`<ellipse cx="16" cy="9" rx="7" ry="8" fill="#666"/><path d="M3 27c0-12 26-12 26 0 0 4-3 4-6 4H9c-3 0-6 0-6-4z" fill="#666"/>`)}
          <div class="ok">${ic(26, 26, svg`<circle cx="13" cy="13" r="13" fill="#262626"/><circle cx="13" cy="13" r="9.500" fill="#33dd73" stroke="#1fb356"/><path d="M8 13.500l3.500 3.500 6.500-8" stroke="#111" stroke-width="1.400"/>`)}</div>
        </div>
        <div class="round mic">${ic(30, 32, svg`<rect x="8.500" y="1.500" width="13" height="21" rx="6.500" stroke="#fff" stroke-width="1.500"/><path d="M5.500 12v4.500C5.500 28.500 24.500 28.500 24.500 16.500V12M15 26v4M10.500 30.500h9M28 3L1.500 29.500" stroke="#fff" stroke-width="1.500"/>`)}</div>
        <div class="round">${ic(32, 32, svg`<ellipse cx="13" cy="9" rx="6" ry="7.500" stroke="#fff" stroke-width="1.500"/><path d="M17.500 15.500L25 3c2-3 5.500-1.500 4.500 2L24 19c-1 3 .5 7-1 11.500H6.500c-.5-3 0-5-.5-7-5 0-4.500-6.500 3-8.500M6.500 24c-1-3 0-6 1.500-8" stroke="#fff" stroke-width="1.500"/>`)}</div>
        <div class="card">
          <div class="face">${ic(52, 52, svg`<circle cx="25.500" cy="25.500" r="24.500" fill="#222" stroke="#777"/><path d="M25 7c8 0 12 6 11 14l-2 7-3 5v7H19v-7l-3-5-2-7C13 13 17 7 25 7z" fill="#6b6b6b"/>`)}</div>
          <div class="who">${fit("MEHMET K...", 90)}</div>
        </div>
        <div class="open">${ic(22, 34, svg`<path d="M13 3L4 17l9 14" stroke="#9a35ab" stroke-width="4"/><path d="M18 8.500L12 17l6 8.500" stroke="#9a35ab" stroke-width="3.600"/><path d="M13 3L4 17l9 14M18 8.500L12 17l6 8.500" stroke="#fff" stroke-width="1.900" stroke-linecap="round"/>`)}</div>
      </div>`;
  }
}

@customElement("windows-taskbar")
class WindowsTaskbar extends LitElement {
  static styles = [base, css`
    :host { height: 38px; background: linear-gradient(90deg, #28231e, #30281e 230px, #2a221c 380px, #2b261d 640px, #211f1b 900px, #1c1c1a); color: #f5f5f5; font: 15px/20px "Noto Sans", "Open Sans", sans-serif; }
    .bar { display: grid; height: 38px; align-items: center; justify-items: center; grid-template-columns: 44px 46px 44px 46px 52px 38px 57px 36px 53px 40px 9px 190px 56px 427px 24px 66px 26px 60px 42px 41px 20px 38px 32px 53px 70px 57px 13px; }
    .app { display: flex; align-items: center; width: 190px; height: 38px; border-bottom: 3px solid #76b9ed; padding: 2px 0 0 6px; gap: 5px; background: #ffffff08; }
    .edge { width: 1px; height: 38px; background: #666; }
    .big { font-size: 17px; margin-top: 1px; }
  `];
  render() {
    return html`<div class="bar">
      ${ic(20, 20, svg`<path d="M0 3l8.500-1.300V9.500H0zM9.500 1.500L20 0v9.500H9.500zM0 10.500h8.500v7.800L0 17zM9.500 10.500H20V20L9.500 18.500z" fill="#fff"/>`)}
      ${ic(21, 21, svg`<circle cx="13" cy="7.500" r="6.500" stroke="#fff" stroke-width="1.400"/><path d="M8.500 12.500L1 20.500" stroke="#fff" stroke-width="1.400"/>`)}
      ${ic(20, 20, svg`<circle cx="10" cy="10" r="8.200" stroke="#fff" stroke-width="2.600"/>`)}
      ${ic(22, 20, svg`<path d="M2 0v3.500h12V0M2 20v-3.500h12V20M2 6.500h12v7H2z" stroke="#fff" stroke-width="1.300"/><path d="M19.500 0v4M19.500 10.500V20" stroke="#fff" stroke-width="1.300"/><path d="M18 6h3v3h-3z" fill="#fff"/>`)}
      ${ic(20, 18, svg`<path d="M0 6l10-6 10 6v12H0z" fill="#0e5ca8"/><path d="M0 6h20l-10 8z" fill="#f2f7fc"/><path d="M0 6.500L10 13l10-6.500V18H0z" fill="#2ba6e8"/><path d="M20 6.500V18H4z" fill="#4cc3f5"/><path d="M1.500 5.500h17L10 12.500z" fill="#fff"/>`)}
      ${ic(18, 18, svg`<circle cx="9" cy="9" r="9" fill="#1382ee"/><path d="M7.700 18v-6.500H5.400V9h2.300V7.200C7.700 4.900 9 3.700 11 3.700l2 .2v2.200h-1.200c-1 0-1.400.7-1.400 1.300V9h2.500l-.4 2.500h-2.100V18z" fill="#fff"/>`)}
      ${ic(20, 20, svg`<defs><linearGradient id="m" x1="0" y1="1" x2="1" y2="0"><stop offset="0" stop-color="#1680ff"/><stop offset=".5" stop-color="#a040ff"/><stop offset="1" stop-color="#ff6a70"/></linearGradient></defs><path d="M9 0C3.500 0 0 4.300 0 9.700c0 2.900.8 5.300 2.500 7V20l3-1.600c1.200.4 2.300.5 3.500.5 5.500 0 9.500-4 9.500-9.300S14.500 0 9 0z" fill="url(#m)"/><path d="M3.500 12.500l4-5 3.500 2.700L15 7l-4 5.300L7.500 9.700z" fill="#fff" stroke="#fff"/>`)}
      ${ic(19, 18, svg`<path d="M0 1h7l2 2h9v14H0z" fill="#e9a820"/><path d="M0 5h18v12H0z" fill="#fdd767"/><path d="M3.500 17v-7h11v7h-3v-4h-5v4z" fill="#3f94d8"/>`)}
      ${ic(19, 21, svg`<path d="M5.500 5V1h8v4" stroke="#eee" stroke-width="1.500"/><path d="M0 5h19v15H0z" fill="#f4f4f4"/><path d="M6 8h3v3.500H6z" fill="#e8502a"/><path d="M10 8h3v3.500h-3z" fill="#7cb82f"/><path d="M6 12.500h3V16H6z" fill="#1e9fe6"/><path d="M10 12.500h3V16h-3z" fill="#f6b81a"/>`)}
      ${ic(20, 20, svg`<ellipse cx="10" cy="10" rx="7.300" ry="8.200" stroke="#ee1f2f" stroke-width="3.600"/><path d="M10 .2C21 1 22 19 10 19.800c5-1.500 6-5 6-9.800S15 2 10 .2z" fill="#b50f22"/><ellipse cx="10" cy="10" rx="4" ry="7" fill="#2a221c"/>`)}
      <i></i>
      <div class="app">
        ${ic(18, 18, svg`<circle cx="9" cy="9" r="9" fill="#33a852"/><path d="M9 9L1.200 4.500A9 9 0 0 1 16.800 4.500H9z" fill="#e94335"/><path d="M9 9L1.200 4.500 9 4.500h7.800A9 9 0 0 1 9 18z" fill="#fbbc05"/><path d="M1.200 4.500L5.500 11 9 13l-1 5A9 9 0 0 1 1.200 4.500z" fill="#33a852"/><path d="M1.200 4.500A9 9 0 0 1 16.800 4.500H9L5 8z" fill="#e94335"/><circle cx="9" cy="9" r="4.300" fill="#fff"/><circle cx="9" cy="9" r="3.400" fill="#4285f4"/>`)}
        ${fit("BMÜ-313 Biçimsel Dil...", 153)}
      </div>
      ${ic(20, 20, svg`<defs><linearGradient id="e" x1="0" y1="0" x2="1" y2=".6"><stop offset="0" stop-color="#2bb4ea"/><stop offset="1" stop-color="#55dc6a"/></linearGradient></defs><path d="M0 10C0 4 5 0 10 0c6 0 10 4 10 8 0 3-2.500 5-5 5-2 0-3.500-.7-3-1.800C13.500 8 10 5.500 7 6 3 6.500.5 9 0 12z" fill="url(#e)"/><path d="M0 10c.5-3.500 5-6 9-4-3 1-4 4-3 7.500C7 17 11 18.500 15 17.500c-2 2-4 2.500-5.500 2.500C4 20 0 15.500 0 10z" fill="#0d7bd0"/><path d="M7.500 8.500C5 12.500 7.500 19 14 18c2-.5 3.500-1.700 4.500-3-4 2-10 1-11-6.500z" fill="#1257a5"/>`)}
      <i></i>
      ${ic(20, 22, svg`<circle cx="13" cy="5.500" r="3.700" stroke="#eee" stroke-width="1.400"/><circle cx="6" cy="11.500" r="3.300" stroke="#eee" stroke-width="1.400"/><path d="M1 21c0-8 10-8 10 0M11.500 10.500c4-1.500 7 1 7 5" stroke="#eee" stroke-width="1.400"/>`)}
      <i></i>
      ${ic(24, 24, svg`<defs><linearGradient id="n" x1="0" y1="0" x2="0" y2="1"><stop offset="0" stop-color="#ffe21f"/><stop offset="1" stop-color="#f9a51a"/></linearGradient></defs><path d="M15 1c3 7-2 15-14 14 2 10 22 11 22-3 0-5-3-9-8-11z" fill="url(#n)"/>`)}
      ${fit("27°C", 37, "big")}
      ${fit("Clear", 41, "big")}
      ${ic(16, 9, svg`<path d="M1 8l7-7 7 7" stroke="#eee" stroke-width="1.400"/>`)}
      ${ic(17, 17, svg`<path d="M1 16C1 8 8 1 16 1" stroke="#777"/><path d="M5 16c0-6 5-11 11-11M9 16c0-4 3-7 7-7" stroke="#aaa"/><path d="M12 16c0-2 1.500-3.500 4-3.500V16z" fill="#fff"/>`)}
      ${ic(21, 16, svg`<path d="M7.500 4h10.500v10H4.500V9M18.500 7h2v4h-2" stroke="#fff" stroke-width="1.400"/><path d="M8.500 6h8v6H6.500z" fill="#fff"/><path d="M1 0v3M5 0v3M0 3h6v2.500L3 7.500 0 5.500zM3 7v4" stroke="#fff"/>`)}
      ${ic(30, 18, svg`<rect x=".7" y=".7" width="28.600" height="16.600" rx="1" stroke="#eee" stroke-width="1.400"/><path d="M4 5.500h22M4 9h22" stroke="#eee" stroke-width="1.500" stroke-dasharray="1.500 1.400"/><path d="M4 13h3M9.500 13h11M23 13h3" stroke="#eee" stroke-width="1.400"/>`)}
      ${fit("ENG", 29)}
      ${fit("1:22 PM", 51)}
      ${ic(20, 20, svg`<path d="M.7.700h18.600v15H12.500L10 18.500 7.500 15.700H.7z" stroke="#eee" stroke-width="1.400"/>`)}
      <div class="edge"></div>
    </div>`;
  }
}

@customElement("app-root")
class AppRoot extends LitElement {
  static styles = [base, css`
    :host { width: 1680px; height: 1050px; overflow: hidden; background: #262626; }
  `];
  render() {
    return html`<browser-tabs></browser-tabs><browser-toolbar></browser-toolbar><session-view></session-view><windows-taskbar></windows-taskbar>`;
  }
}
